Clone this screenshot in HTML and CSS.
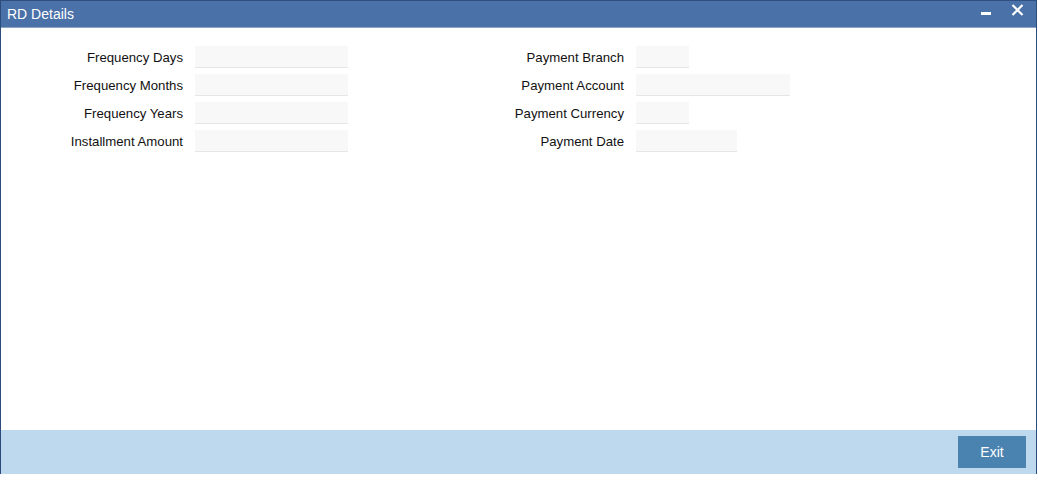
FILE: index.html
```html
<!DOCTYPE html>
<html>
<head>
<meta charset="utf-8">
<title>RD Details</title>
<link rel="stylesheet" href="styles.css">
</head>
<body>
<div class="window">
  <div class="titlebar">
    <span class="title">RD Details</span>
    <div class="controls">
      <svg class="icon-min" width="10" height="4" viewBox="0 0 10 4"><rect x="0" y="0" width="10" height="3" fill="#fff"/></svg>
      <svg class="icon-close" width="13" height="12" viewBox="0 0 13 12"><path d="M1.5 1 L11.5 11 M11.5 1 L1.5 11" stroke="#fff" stroke-width="2.2" fill="none"/></svg>
    </div>
  </div>
  <div class="content">
    <div class="form">
      <div class="section left">
        <label>Frequency Days</label><div class="field w153"></div>
        <label>Frequency Months</label><div class="field w153"></div>
        <label>Frequency Years</label><div class="field w153"></div>
        <label>Installment Amount</label><div class="field w153"></div>
      </div>
      <div class="section right">
        <label>Payment Branch</label><div class="field w53"></div>
        <label>Payment Account</label><div class="field w154"></div>
        <label>Payment Currency</label><div class="field w53"></div>
        <label>Payment Date</label><div class="field w101"></div>
      </div>
    </div>
  </div>
  <div class="footer">
    <button class="btn">Exit</button>
  </div>
</div>
</body>
</html>
```
FILE: styles.css
```css
html, body {
  margin: 0;
  padding: 0;
  background: #fff;
}
body {
  font-family: "Liberation Sans", Arial, sans-serif;
  color: #1a1a1a;
}
.window {
  width: 1035px;
  height: 474px;
  border-left: 1px solid #2b4b7d;
  border-right: 1px solid #2b4b7d;
  display: flex;
  flex-direction: column;
  background: #fff;
}
.titlebar {
  border-top: 1px solid #2e4f80;
  border-bottom: 1px solid #8ea3bd;
  background: #4a71a8;
  display: flex;
  align-items: center;
  justify-content: space-between;
  box-sizing: content-box;
  height: 26px;
}
.title {
  color: #fff;
  font-size: 14px;
  margin-left: 6px;
  margin-top: -1px;
}
.controls {
  display: flex;
  align-items: flex-start;
  height: 26px;
  margin-right: 12px;
}
.icon-min {
  margin-top: 11px;
  margin-right: 20px;
}
.icon-close {
  margin-top: 3px;
}
.content {
  flex: 1;
  padding-top: 18px;
}
.form {
  display: flex;
}
.section {
  display: grid;
  grid-auto-rows: 22px;
  row-gap: 6px;
  column-gap: 12px;
  align-items: stretch;
}
.section.left {
  grid-template-columns: 182px 153px;
}
.section.right {
  margin-left: 116px;
  grid-template-columns: 160px auto;
  justify-items: start;
}
label {
  font-size: 13.2px;
  text-align: right;
  justify-self: end;
  line-height: 20px;
  padding-top: 2px;
  color: #111;
}
.field {
  height: 21px;
  background: #f8f8f8;
  border-bottom: 1px solid #e6e6e6;
}
.w153 { width: 153px; }
.w53 { width: 53px; }
.w154 { width: 154px; }
.w101 { width: 101px; }
.footer {
  height: 44px;
  background: #bed9ed;
  display: flex;
  justify-content: flex-end;
  align-items: flex-start;
}
.btn {
  margin-top: 6px;
  margin-right: 10px;
  width: 68px;
  height: 32px;
  border: none;
  background: #4a83b0;
  color: #fff;
  font-family: "Liberation Sans", Arial, sans-serif;
  font-size: 14px;
  padding: 0;
}
```
